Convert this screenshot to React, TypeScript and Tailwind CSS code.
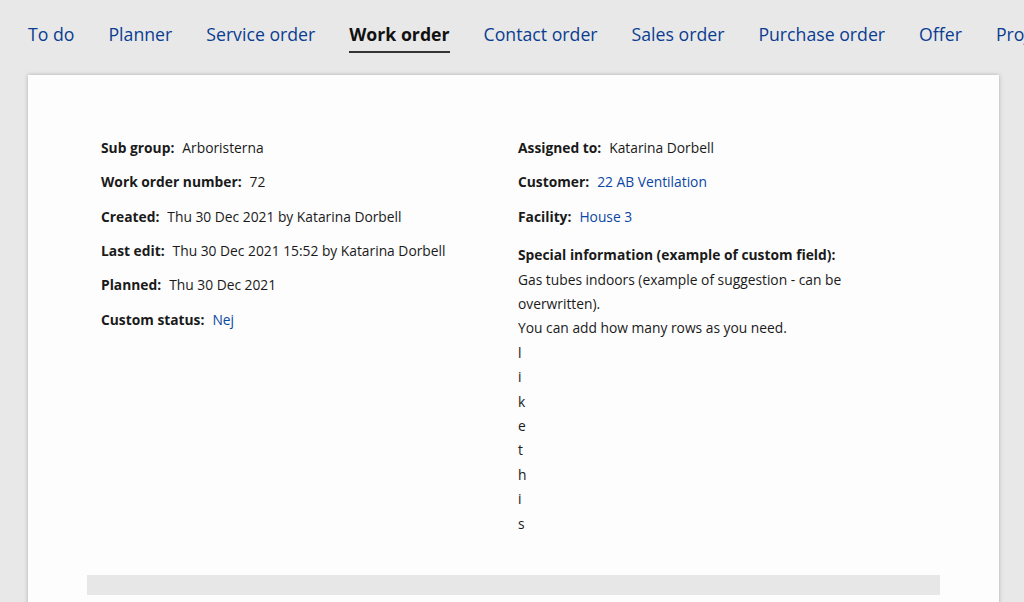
import React from 'react';

const tabs = ['To do', 'Planner', 'Service order', 'Work order', 'Contact order', 'Sales order', 'Purchase order', 'Offer', 'Project'];

const Field: React.FC<{ label: string; value: string; link?: boolean }> = ({ label, value, link }) => (
  <div className="h-[34.4px] flex items-center">
    <span className="font-bold">{label}:</span>
    <span className={`ml-[8px] ${link ? 'text-[#0a47a3]' : ''}`}>{value}</span>
  </div>
);

export default function App() {
  const extra = 'likethis'.split('');
  return (
    <div className="h-[602px] overflow-hidden bg-[#e8e8e8] text-[#1a1a1a]" style={{ fontFamily: '"Open Sans", sans-serif' }}>
      <nav className="flex gap-[34px] pl-[28px] pt-[20px] h-[75px] whitespace-nowrap text-[17.7px]">
        {tabs.map((t) => (
          <div key={t} className="flex flex-col">
            <span className={t === 'Work order' ? 'font-bold text-[#111] leading-[28px]' : 'text-[#0a3d91] leading-[28px]'}>{t}</span>
            {t === 'Work order' && <div className="h-[2px] bg-[#333] mt-[3px]" />}
          </div>
        ))}
      </nav>
      <div className="ml-[28px] mr-[25px] bg-[#fdfdfd] shadow-[0_0_4px_rgba(0,0,0,0.25)] h-[600px] pt-[56px] px-[59px]">
        <div className="grid grid-cols-[417px_1fr] pl-[14px] text-[13.8px]">
          <div>
            <Field label="Sub group" value="Arboristerna" />
            <Field label="Work order number" value="72" />
            <Field label="Created" value="Thu 30 Dec 2021 by Katarina Dorbell" />
            <Field label="Last edit" value="Thu 30 Dec 2021 15:52 by Katarina Dorbell" />
            <Field label="Planned" value="Thu 30 Dec 2021" />
            <Field label="Custom status" value="Nej" link />
          </div>
          <div>
            <Field label="Assigned to" value="Katarina Dorbell" />
            <Field label="Customer" value="22 AB Ventilation" link />
            <Field label="Facility" value="House 3" link />
            <div className="leading-[24.4px] mt-[9px] max-w-[340px]">
              <div className="font-bold">Special information (example of custom field):</div>
              <div>Gas tubes indoors (example of suggestion - can be overwritten).</div>
              <div>You can add how many rows as you need.</div>
              {extra.map((c, i) => (
                <div key={i}>{c}</div>
              ))}
            </div>
          </div>
        </div>
        <div className="mt-[39px] h-[20px] bg-[#e7e7e7]" />
      </div>
    </div>
  );
}
